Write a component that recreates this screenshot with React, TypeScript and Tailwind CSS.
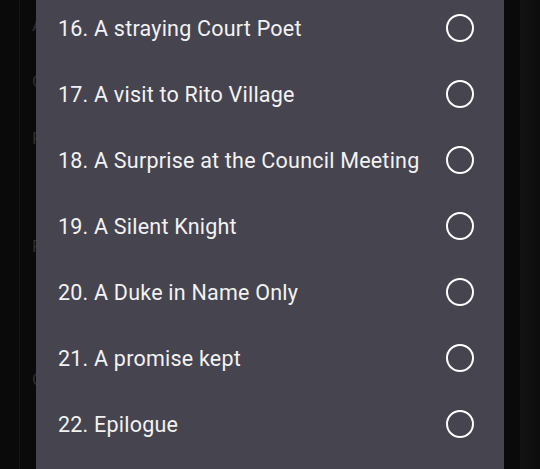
import React from "react";

const chapters = [
  "16. A straying Court Poet",
  "17. A visit to Rito Village",
  "18. A Surprise at the Council Meeting",
  "19. A Silent Knight",
  "20. A Duke in Name Only",
  "21. A promise kept",
  "22. Epilogue",
];

// faint letters of the page behind the dimmed overlay
const ghosts = [
  { top: "mt-[15px]", text: "A" },
  { top: "mt-[36px]", text: "C" },
  { top: "mt-[37px]", text: "F" },
  { top: "mt-[88px]", text: "F" },
  { top: "mt-[113px]", text: "C" },
];

const Radio = () => (
  <span className="w-[28px] h-[28px] rounded-full border-[2.5px] border-white shrink-0" />
);

export default function App() {
  return (
    <div
      className="w-[540px] h-[469px] overflow-hidden bg-[#0a0a0a] flex"
      style={{ fontFamily: "Roboto, 'Liberation Sans', sans-serif" }}
    >
      <div className="w-[36px] shrink-0 flex">
        <div className="w-[20px] border-r border-[#161616]" />
        <div className="flex-1 flex flex-col overflow-hidden">
          {ghosts.map((g, i) => (
            <span
              key={i}
              className={`${g.top} pl-[12px] text-[17px] leading-[20px] text-[#2e2e2e]`}
            >
              {g.text}
            </span>
          ))}
        </div>
      </div>

      <div className="w-[468px] shrink-0 bg-[#46444f] flex flex-col -mt-[5px]">
        {chapters.map((c) => (
          <div
            key={c}
            className="h-[66px] flex items-center justify-between pl-[22px] pr-[30px]"
          >
            <span className="text-[21.5px] text-[#f2f2f2] tracking-[0.22px] pt-[3px]">{c}</span>
            <Radio />
          </div>
        ))}
      </div>

      <div className="w-[16px] shrink-0 bg-[#0a0a0a]" />
      <div className="flex-1 bg-gradient-to-r from-[#131313] to-[#0c0c0c]" />
    </div>
  );
}
